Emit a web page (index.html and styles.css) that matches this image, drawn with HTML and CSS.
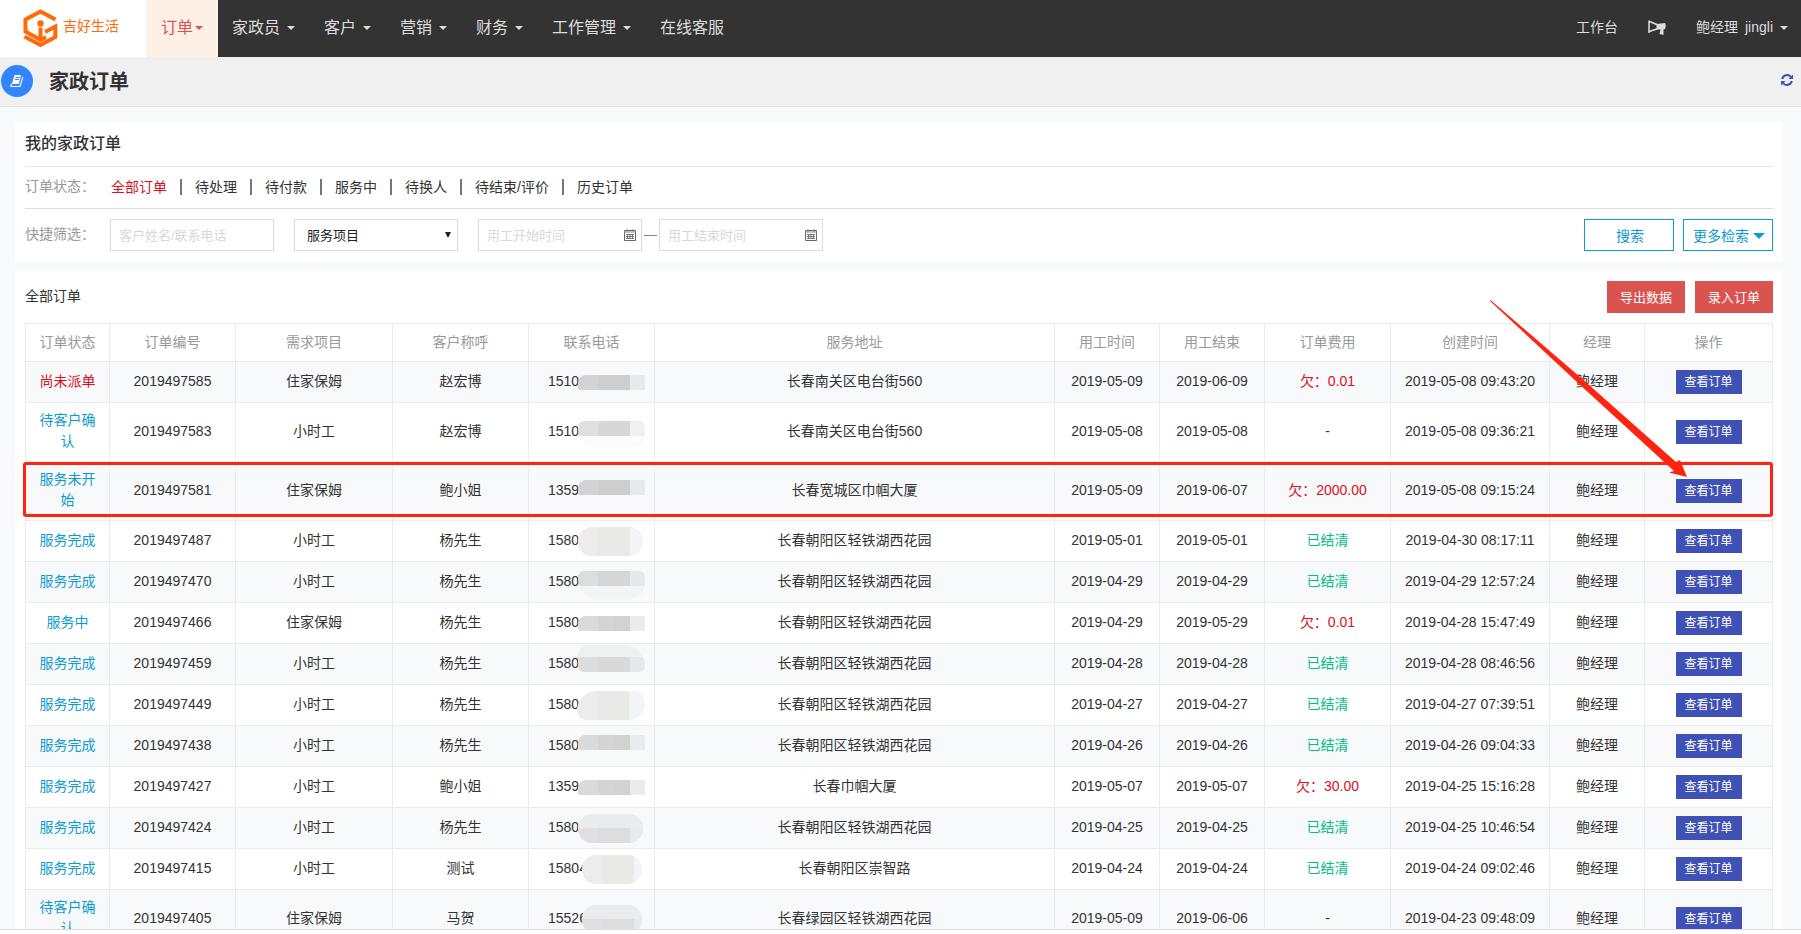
FILE: index.html
```html
<!DOCTYPE html>
<html lang="zh-CN">
<head>
<meta charset="utf-8">
<title>家政订单</title>
<link rel="stylesheet" href="styles.css">
</head>
<body>
<header class="topbar">
  <a class="brand" href="#">
    <svg class="brand-mark" viewBox="0 0 36 40" aria-hidden="true">
      <path d="M32.500 10.600 L17.500 2.500 L2.500 10.500 V22.500 L17.500 31 L23 28" fill="none" stroke="#ff6a0a" stroke-width="4"/>
      <path d="M22 23 L32.300 17.500 V28 L17.500 36 L1.500 27.500" fill="none" stroke="#ff6a0a" stroke-width="4"/>
      <path d="M17.500 18.500 V30" stroke="#ff6a0a" stroke-width="4"/>
      <circle cx="17.500" cy="14.500" r="3.200" fill="#ff6a0a"/>
    </svg>
    <span>吉好生活</span>
  </a>
  <nav class="nav">
    <a class="nav-item active" href="#">订单<i class="caret"></i></a>
    <a class="nav-item" href="#">家政员<i class="caret"></i></a>
    <a class="nav-item" href="#">客户<i class="caret"></i></a>
    <a class="nav-item" href="#">营销<i class="caret"></i></a>
    <a class="nav-item" href="#">财务<i class="caret"></i></a>
    <a class="nav-item" href="#">工作管理<i class="caret"></i></a>
    <a class="nav-item" href="#">在线客服</a>
  </nav>
  <div class="account">
    <a href="#">工作台</a>
    <a class="horn" href="#" aria-label="公告"><svg viewBox="0 0 18 16"><path d="M1 0.500 V13 M1.500 1.500 L10 5 M1.500 11.500 L10 8.500" fill="none" stroke="#ddd" stroke-width="1.500"/><path d="M8.500 4 L17 3 Q18.500 5 17 9 L15.500 9.500 V15 L11.500 14 L12.500 9.500 L8.500 9.500 Z" fill="#ddd"/></svg></a>
    <a class="user" href="#"><span>鲍经理</span><span>jingli</span><i class="caret"></i></a>
  </div>
</header>
<div class="pagebar">
  <span class="page-icon"><svg viewBox="0 0 14 14" aria-hidden="true"><path d="M4.500 1 H11 L8.800 10 H2 Z" fill="#fff"/><path d="M2 10 Q0.500 10.500 1 12.500 H10 L12.800 3.200" fill="none" stroke="#fff" stroke-width="1.200"/><path d="M5.500 3.500 H9.500 M5 5.500 H9" stroke="#3385ff" stroke-width="1"/></svg></span>
  <h1>家政订单</h1>
  <button class="refresh" type="button" aria-label="刷新"><svg viewBox="0 0 12 12"><path d="M1.200 5 A5 5 0 0 1 10 3 M10.800 7 A5 5 0 0 1 2 9" fill="none" stroke="#3f51b5" stroke-width="2"/><path d="M12 0.500 V5 H7.500 Z M0 11.500 V7 H4.500 Z" fill="#3f51b5"/></svg></button>
</div>
<main class="content">
  <section class="card">
    <h2>我的家政订单</h2>
    <div class="status-row">
      <span class="label">订单状态：</span>
      <a class="current" href="#">全部订单</a><a href="#">待处理</a><a href="#">待付款</a><a href="#">服务中</a><a href="#">待换人</a><a href="#">待结束/评价</a><a href="#">历史订单</a>
    </div>
    <form class="filter-row">
      <label class="label" for="kw">快捷筛选：</label>
      <input class="field" id="kw" type="text" placeholder="客户姓名/联系电话">
      <span class="select-wrap"><select class="field" aria-label="服务项目"><option>服务项目</option></select></span>
      <span class="range">
        <span class="date"><input class="field" type="text" aria-label="用工开始时间" placeholder="用工开始时间"><svg viewBox="0 0 12 12"><path d="M0.500 1.500 H11.500 V11.500 H0.500 Z" fill="#fff" stroke="#666"/><path d="M0 3 H12 M3 0 V3 M9 0 V3" stroke="#888"/><path d="M2 5.500 H10 M2 7.500 H10 M2 9.500 H10 M3.500 5 V10 M6 5 V10 M8.500 5 V10" stroke="#777"/></svg></span>
        <span class="dash"></span>
        <span class="date"><input class="field" type="text" aria-label="用工结束时间" placeholder="用工结束时间"><svg viewBox="0 0 12 12"><path d="M0.500 1.500 H11.500 V11.500 H0.500 Z" fill="#fff" stroke="#666"/><path d="M0 3 H12 M3 0 V3 M9 0 V3" stroke="#888"/><path d="M2 5.500 H10 M2 7.500 H10 M2 9.500 H10 M3.500 5 V10 M6 5 V10 M8.500 5 V10" stroke="#777"/></svg></span>
      </span>
      <span class="actions">
        <button class="btn-line" type="button">搜索</button>
        <button class="btn-line" type="button">更多检索<i class="tri"></i></button>
      </span>
    </form>
  </section>
  <section class="card">
    <div class="list-head">
      <h3>全部订单</h3>
      <button class="btn-red" type="button">导出数据</button>
      <button class="btn-red" type="button">录入订单</button>
    </div>
    <div class="table-wrap">
      <table class="orders">
        <colgroup><col class="w84"><col class="w126"><col class="w157"><col class="w136"><col class="w126"><col><col class="w105"><col class="w105"><col class="w126"><col class="w159"><col class="w95"><col class="w128"></colgroup>
        <thead><tr><th>订单状态</th><th>订单编号</th><th>需求项目</th><th>客户称呼</th><th>联系电话</th><th>服务地址</th><th>用工时间</th><th>用工结束</th><th>订单费用</th><th>创建时间</th><th>经理</th><th>操作</th></tr></thead>
        <tbody id="rows"></tbody>
      </table>
      <svg class="arrow" viewBox="0 0 198 178" aria-hidden="true"><path d="M0.500 0 L90 77 L186 162 L190 160 L197 177 L179 172.500 L184 171 L88 83 L0 1 Z" fill="#ff2312"/></svg>
    </div>
  </section>
</main>
<footer class="footer"></footer>
<script src="rows.js"></script>
</body>
</html>
```
FILE: rows.js
```js
// status, order no, service, customer, phone prefix, address, start, end, fee, created, mask style
const orders = [
  ["尚未派单", "2019497585", "住家保姆", "赵宏博", "1510", "长春南关区电台街560", "2019-05-09", "2019-06-09", "欠：0.01", "2019-05-08 09:43:20", "slim dark"],
  ["待客户确认", "2019497583", "小时工", "赵宏博", "1510", "长春南关区电台街560", "2019-05-08", "2019-05-08", "-", "2019-05-08 09:36:21", "top faint"],
  ["服务未开始", "2019497581", "住家保姆", "鲍小姐", "1359", "长春宽城区巾帼大厦", "2019-05-09", "2019-06-07", "欠：2000.00", "2019-05-08 09:15:24", "dark raised"],
  ["服务完成", "2019497487", "小时工", "杨先生", "1580", "长春朝阳区轻铁湖西花园", "2019-05-01", "2019-05-01", "已结清", "2019-04-30 08:17:11", "pill"],
  ["服务完成", "2019497470", "小时工", "杨先生", "1580", "长春朝阳区轻铁湖西花园", "2019-04-29", "2019-04-29", "已结清", "2019-04-29 12:57:24", "top"],
  ["服务中", "2019497466", "住家保姆", "杨先生", "1580", "长春朝阳区轻铁湖西花园", "2019-04-29", "2019-05-29", "欠：0.01", "2019-04-28 15:47:49", "slim"],
  ["服务完成", "2019497459", "小时工", "杨先生", "1580", "长春朝阳区轻铁湖西花园", "2019-04-28", "2019-04-28", "已结清", "2019-04-28 08:46:56", "low"],
  ["服务完成", "2019497449", "小时工", "杨先生", "1580", "长春朝阳区轻铁湖西花园", "2019-04-27", "2019-04-27", "已结清", "2019-04-27 07:39:51", "pill slope"],
  ["服务完成", "2019497438", "小时工", "杨先生", "1580", "长春朝阳区轻铁湖西花园", "2019-04-26", "2019-04-26", "已结清", "2019-04-26 09:04:33", "raised"],
  ["服务完成", "2019497427", "小时工", "鲍小姐", "1359", "长春巾帼大厦", "2019-05-07", "2019-05-07", "欠：30.00", "2019-04-25 15:16:28", "slim"],
  ["服务完成", "2019497424", "小时工", "杨先生", "1580", "长春朝阳区轻铁湖西花园", "2019-04-25", "2019-04-25", "已结清", "2019-04-25 10:46:54", "pill mid"],
  ["服务完成", "2019497415", "小时工", "测试", "15804", "长春朝阳区崇智路", "2019-04-24", "2019-04-24", "已结清", "2019-04-24 09:02:46", "pill short"],
  ["待客户确认", "2019497405", "住家保姆", "马贺", "15526", "长春绿园区轻铁湖西花园", "2019-05-09", "2019-06-06", "-", "2019-04-23 09:48:09", "pill mid short"]
];

document.getElementById("rows").innerHTML = orders.map((o, i) => {
  const feeClass = o[8].startsWith("欠") ? "owed" : o[8] === "-" ? "" : "paid";
  return `<tr class="${i === 2 ? "marked" : ""}">
    <td><a href="#" class="${i === 0 ? "owed" : "state"}">${o[0]}</a></td>
    <td>${o[1]}</td><td>${o[2]}</td><td>${o[3]}</td>
    <td><span class="phone">${o[4]}<i class="mask ${o[10]}"></i></span></td>
    <td>${o[5]}</td><td>${o[6]}</td><td>${o[7]}</td>
    <td class="${feeClass}">${o[8]}</td><td>${o[9]}</td><td>鲍经理</td>
    <td><button class="view" type="button">查看订单</button></td></tr>`;
}).join("");
```
FILE: styles.css
```css
*, *::before, *::after { box-sizing: border-box; }
body {
  margin: 0;
  height: 100vh;
  display: flex;
  flex-direction: column;
  overflow: hidden;
  background: #fff;
  color: #333;
  font: 14px/21px "Liberation Sans", "Noto Sans CJK SC", sans-serif;
}
a { color: inherit; text-decoration: none; }
button, input, select { font: inherit; }
h1, h2, h3 { margin: 0; }

.topbar { display: flex; flex: none; height: 57px; background: #333; color: #ddd; }
.brand { display: flex; align-items: center; gap: 4px; width: 146px; padding-left: 23px; background: #fff; color: #ff6a0a; }
.brand span { padding-bottom: 4px; }
.brand-mark { width: 36px; height: 40px; }
.nav { display: flex; flex: 1; font-size: 16px; }
.nav-item { display: flex; align-items: center; gap: 7px; padding: 0 15px 2px 14px; }
.nav-item.active { gap: 2px; padding-left: 15px; background: #fff0e6; color: #d9534f; }
.caret { border: 4px solid transparent; border-top-color: currentColor; border-bottom: 0; }
.account { display: flex; align-items: center; gap: 30px; padding: 0 13px 2px 0; }
.user { display: flex; align-items: center; gap: 7px; }
.horn svg { display: block; width: 18px; height: 16px; }

.pagebar { display: flex; flex: none; align-items: center; height: 50px; padding: 0 8px 2px 1px; background: #f0f0f0; border-bottom: 1px solid #e4e5e7; }
.page-icon { display: flex; align-items: center; justify-content: center; width: 32px; height: 32px; border-radius: 50%; background: #3385ff; }
.page-icon svg { width: 14px; height: 14px; }
.pagebar h1 { flex: 1; padding: 2px 0 0 16px; font-size: 20px; line-height: 30px; }
.refresh { padding: 0 0 2px; border: 0; background: none; }
.refresh svg { display: block; width: 12px; height: 12px; }

.content { display: flex; flex: 1; flex-direction: column; gap: 10px; min-height: 0; overflow: hidden; padding: 15px 18px 0 15px; background: #f8f9fb; }
.card { flex: none; padding: 10px; background: #fff; }
.card h2 { height: 35px; border-bottom: 1px solid #e7e7e7; font-size: 16px; font-weight: 500; line-height: 24px; }
.label { width: 84px; color: #999; }
.status-row { display: flex; align-items: center; height: 42px; padding-bottom: 2px; border-bottom: 1px solid #ddd; }
.status-row a { padding: 0 13px; line-height: 16px; border-left: 2px solid #777; }
.status-row .current { padding-left: 0; border-left: 0; color: #d9111b; }
.status-row .label { width: 86px; }
.filter-row { display: flex; padding-top: 10px; }
.filter-row .label { padding-top: 5px; width: 85px; }
.field { width: 164px; height: 32px; padding: 0 8px; border: 1px solid #ddd; border-radius: 0; background: #fff; color: #222; font-size: 13px; }
.field::placeholder { color: #d8d8d8; }
.select-wrap { position: relative; margin: 0 20px; }
.select-wrap .field { display: block; padding-left: 12px; appearance: none; }
.select-wrap::after { content: ""; position: absolute; right: 7px; top: 13px; border: 3px solid transparent; border-top: 6px solid #222; border-bottom: 0; }
.range { display: flex; align-items: center; }
.date { position: relative; }
.date .field { display: block; }
.date svg { position: absolute; right: 6px; top: 10px; width: 12px; height: 12px; }
.dash { width: 13px; margin: 0 2px; border-top: 1px solid #888; }
.actions { display: flex; gap: 9px; margin-left: auto; }
.btn-line { display: flex; align-items: center; justify-content: center; gap: 4px; width: 90px; height: 32px; padding: 2px 0 0 2px; border: 1px solid #0c9bd0; background: #fff; color: #0c9bd0; }
.tri { border: 6px solid transparent; border-top-color: #0c9bd0; border-bottom: 0; }

.list-head { display: flex; gap: 10px; margin-bottom: 10px; }
.list-head h3 { flex: 1; padding-top: 5px; font-size: 14px; font-weight: 400; }
.btn-red { width: 78px; height: 32px; padding: 0; border: 0; background: #d9534f; color: #fff; font-size: 13px; }

.table-wrap { position: relative; }
.orders { width: 100%; table-layout: fixed; border-collapse: collapse; text-align: center; }
.orders th, .orders td { padding: 8px 12px; border: 1px solid #ebebeb; white-space: nowrap; }
.orders th { height: 38px; color: #999; font-weight: 400; }
.orders td { height: 41px; padding: 7px 12px 9px; }
.orders td:first-child { white-space: normal; }
.orders td:last-child { padding: 8px 12px; }
.orders tbody tr:nth-child(odd) { background: #f8f9fb; }
.w84 { width: 84px; }
.w95 { width: 95px; }
.w105 { width: 105px; }
.w126 { width: 126px; }
.w128 { width: 128px; }
.w136 { width: 136px; }
.w157 { width: 157px; }
.w159 { width: 159px; }
.state { color: #0c9bd0; }
.orders .owed { color: #d9111b; }
.orders .paid { color: #00bf86; }
.view { display: block; width: 66px; height: 24px; margin: 0 auto; padding: 0; border: 0; background: #3f51b5; color: #fff; font-size: 12px; line-height: 24px; }

.phone { display: flex; position: relative; padding-left: 7px; }
.mask { position: absolute; left: 37px; top: 4px; width: 67px; height: 15px; border-radius: 8px 0 0 2px; background: linear-gradient(90deg, #d9dadb 0 20px, #d4d4d5 20px 36px, #d2d2d1 36px 52px, #e9ebec 52px); }
.mask.dark { background: linear-gradient(90deg, #d3d3d5 0 20px, #cececf 20px 52px, #e8e9ec 52px); }
.mask.raised { top: 0; }
.mask.top { top: 0; height: 27px; border-radius: 6px 6px 14px 20px; background: linear-gradient(90deg, #dcdddf 0 20px, #d7d6d6 20px 52px, #e6e9eb 52px) 0 0 / 100% 15px no-repeat #f2f4f6; }
.mask.faint { background: linear-gradient(90deg, #dfdfe0 0 20px, #d8d6d6 20px 52px, #eff0f2 52px) 0 0 / 100% 15px no-repeat #fbfbfb; }
.mask.low { top: -8px; height: 27px; border-radius: 14px 30px 8px 8px; background: linear-gradient(90deg, #dbdcde 0 20px, #d9d9da 20px 52px, #e7e8eb 52px) 0 100% / 100% 15px no-repeat #eff0f2; }
.mask.pill { top: -3px; width: 65px; height: 29px; border-radius: 14px; background: linear-gradient(90deg, #ececed 0 20px, #e9e9e8 20px 52px, #f3f4f5 52px); }
.mask.slope { left: 36px; width: 68px; border-radius: 24px 14px 20px 12px; }
.mask.mid { background: linear-gradient(90deg, #e0e0e2 0 20px, #dddddd 20px 52px, #e8e9ec 52px) 0 100% / 100% 15px no-repeat #eaebed; }
.mask.short { left: 41px; width: 60px; }

.marked td { position: relative; }
.marked td:first-child::after { content: ""; position: absolute; z-index: 2; left: -3px; top: 0; width: calc(100vw - 51px); height: 55px; border: 3px solid #ff2312; border-radius: 3px; pointer-events: none; }
.arrow { position: absolute; z-index: 3; right: 85px; top: -23px; width: 198px; height: 178px; }

.footer { flex: none; height: 5px; border-top: 1px solid #ddd; background: #fff; }
```
